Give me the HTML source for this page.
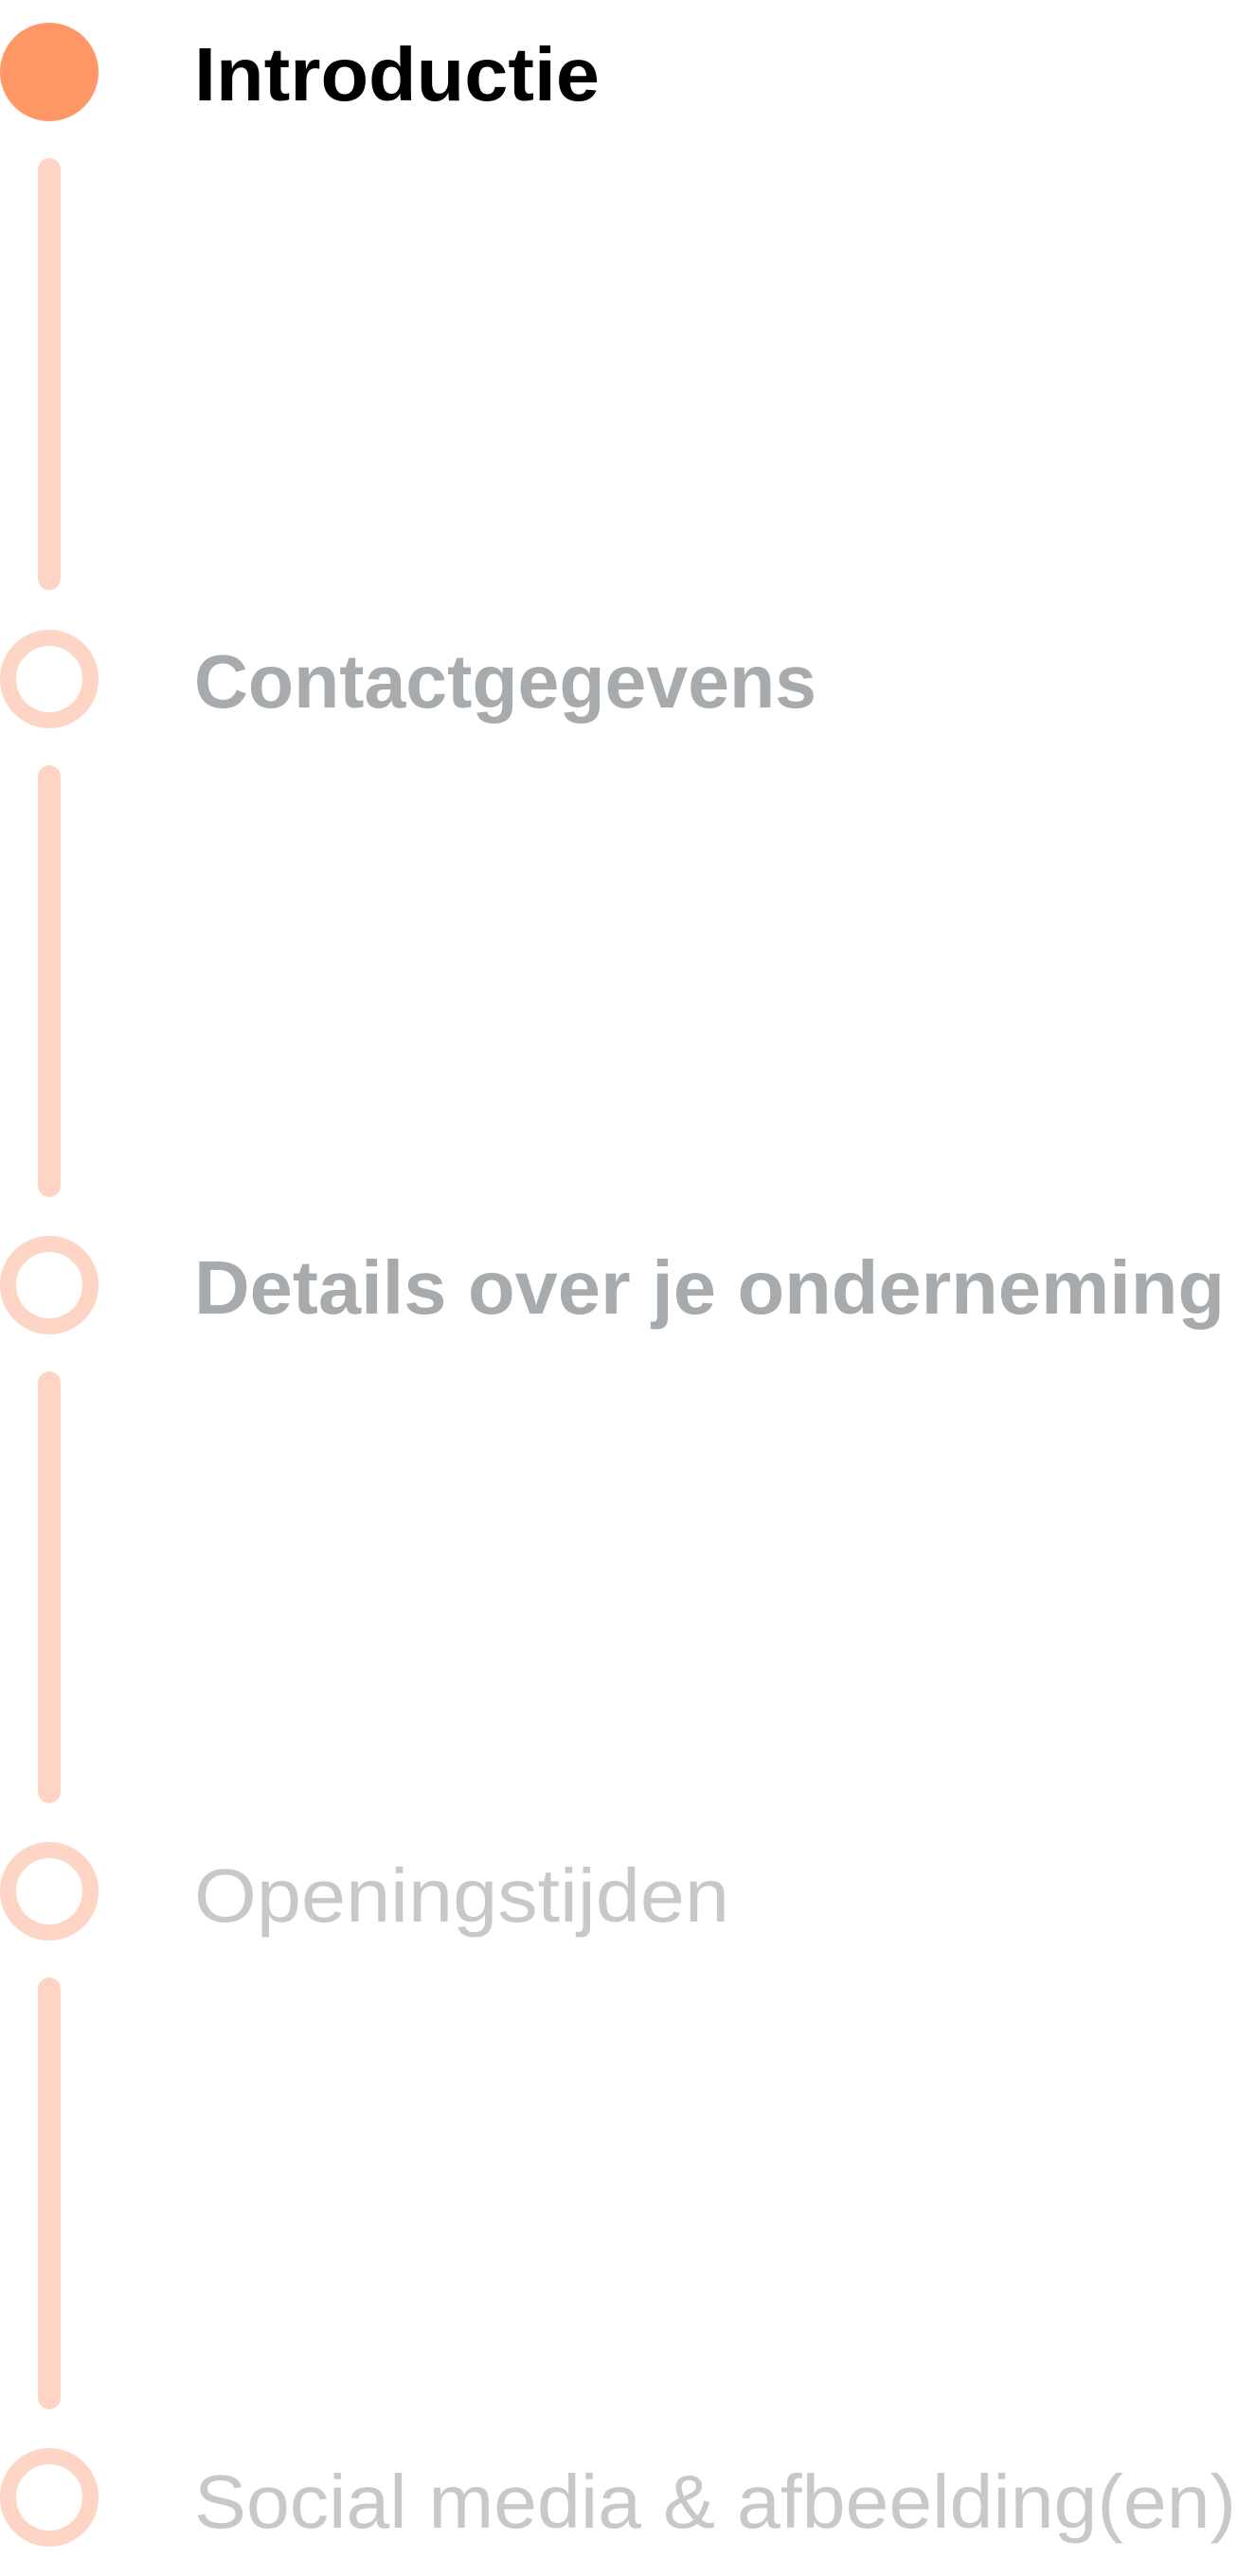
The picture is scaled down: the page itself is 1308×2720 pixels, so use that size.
<!DOCTYPE html>
<html><head><meta charset="utf-8"><style>
html,body{margin:0;padding:0;background:#fff;width:1308px;height:2720px;overflow:hidden}
svg{display:block}
text{font-family:"Liberation Sans",sans-serif;font-size:80px}
</style></head><body>
<svg width="1308" height="2720" viewBox="0 0 1308 2720" xmlns="http://www.w3.org/2000/svg">
<g stroke="#fed5c4" stroke-width="24" stroke-linecap="round">
<line x1="52" y1="179" x2="52" y2="611"/>
<line x1="52" y1="820" x2="52" y2="1252"/>
<line x1="52" y1="1460" x2="52" y2="1892"/>
<line x1="52" y1="2100" x2="52" y2="2532"/>
</g>
<circle cx="52" cy="76" r="52" fill="#ff9766"/>
<g fill="none" stroke="#fed5c4" stroke-width="17">
<circle cx="52" cy="717" r="43.5"/>
<circle cx="52" cy="1357" r="43.5"/>
<circle cx="52" cy="1997" r="43.5"/>
<circle cx="52" cy="2637" r="43.5"/>
</g>
<text x="205" y="106" fill="#000" font-weight="bold" textLength="428" lengthAdjust="spacingAndGlyphs">Introductie</text>
<text x="205" y="747" fill="#a7abad" font-weight="bold" textLength="657" lengthAdjust="spacingAndGlyphs">Contactgegevens</text>
<text x="205" y="1387" fill="#a7abad" font-weight="bold" textLength="1088" lengthAdjust="spacingAndGlyphs">Details over je onderneming</text>
<text x="205" y="2029" fill="#c8c8c8" textLength="565" lengthAdjust="spacingAndGlyphs">Openingstijden</text>
<text x="205" y="2669" fill="#c8c8c8" textLength="1100" lengthAdjust="spacingAndGlyphs">Social media &amp; afbeelding(en)</text>
</svg>
</body></html>
